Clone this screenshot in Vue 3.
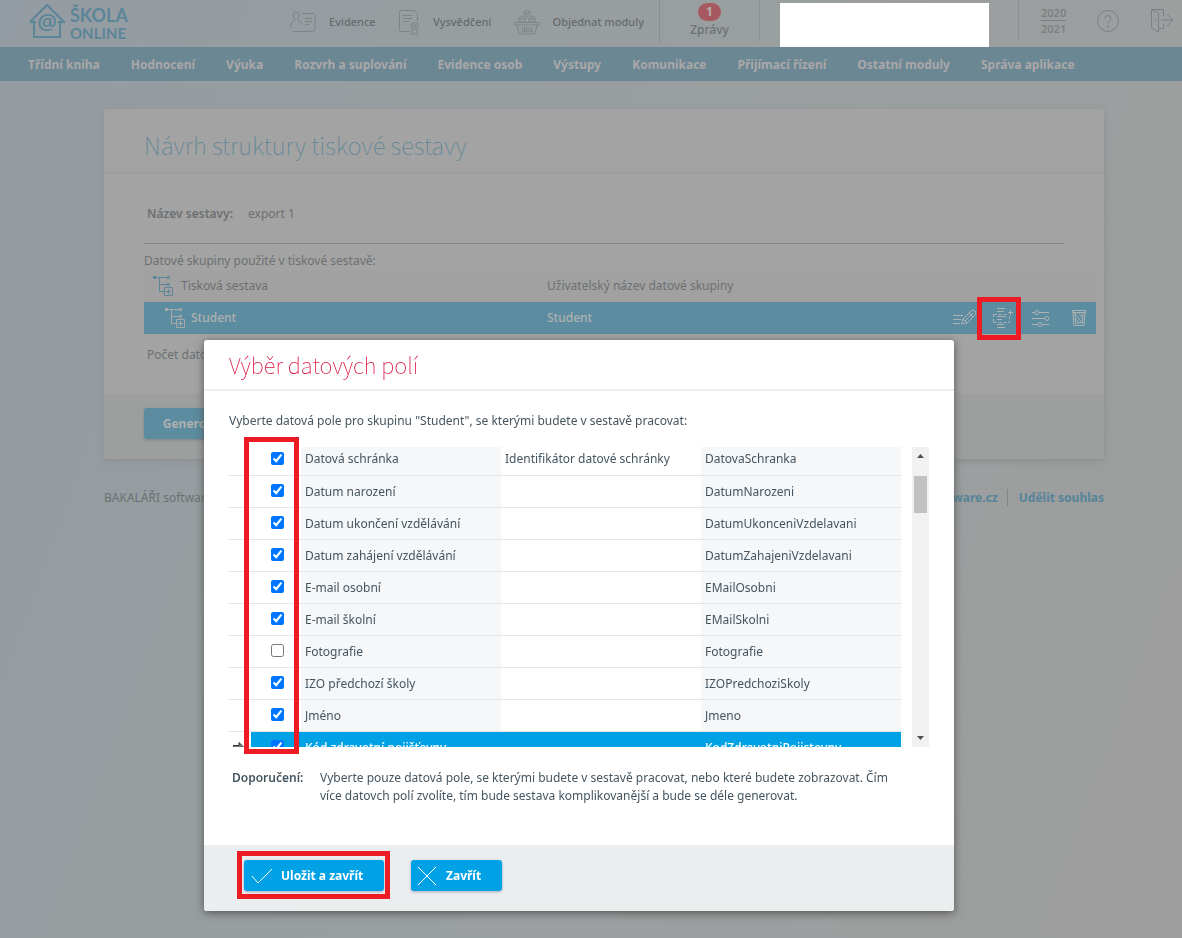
<template>
  <div class="page">
    <header class="topbar">
      <a href="#" class="logo" aria-label="Škola Online">
        <svg width="36" height="36" viewBox="0 0 36 36" fill="none" stroke="currentColor" stroke-width="2">
          <path d="M5 19V34H31V19" />
          <path d="M1 19L18 2L35 19H29M1 19H7" />
          <text x="18" y="27" text-anchor="middle" class="at">@</text>
        </svg>
        <span class="logoText"><b>ŠKOLA</b><b class="small">ONLINE</b></span>
      </a>
      <nav class="quick">
        <a href="#" class="quickLink">
          <svg width="26" height="22" viewBox="0 0 26 22" fill="none" stroke="currentColor">
            <path d="M12 2.500H23Q25 2.500 25 4.500V18Q25 20.500 23 20.500H3M1 17V13Q1 11 4 10Q6 9 4 7Q3 5 3.500 3Q4 1 6 1Q9 1 9 4Q9 6 8 7Q7 9 9 10Q12 11 12 13V14M15 7.500H22M15 10.500H22M15 13.500H19" />
          </svg>
          Evidence
        </a>
        <a href="#" class="quickLink">
          <svg width="22" height="28" viewBox="0 0 22 28" fill="none" stroke="currentColor">
            <path d="M12 23.500H3Q1.500 23.500 1.500 22V4Q1.500 2.500 3 2.500H16L19.500 6V13M5 7.500H14M5 10.500H14M5 13.500H11" />
            <circle cx="16.500" cy="18" r="3.500" /><circle cx="16.500" cy="18" r="1.500" />
            <path d="M14 21V27L16.500 25L19 27V21" />
          </svg>
          Vysvědčení
        </a>
        <a href="#" class="quickLink">
          <svg width="26" height="26" viewBox="0 0 26 26" fill="none" stroke="currentColor">
            <path d="M1 13.500H25V16H1ZM3 16L5 25H21L23 16M8 18L8.500 23H10.500V18M12 18V23H14V18M16 18V23H18L18.500 18M13 1L16 3V6L13 8L10 6V3ZM10 3L13 4.500L16 3M13 4.500V8M8 7L11 9V13H5V9ZM5 9L8 10.500L11 9M18 7L21 9V13H15V9ZM15 9L18 10.500L21 9" />
          </svg>
          Objednat moduly
        </a>
      </nav>
      <a href="#" class="messages"><span class="badge">1</span>Zprávy</a>
      <div class="user"></div>
      <div class="tools">
        <a href="#" class="year"><span>2020</span><span>2021</span></a>
        <a href="#" aria-label="Nápověda">
          <svg width="24" height="24" viewBox="0 0 24 24" fill="none" stroke="currentColor">
            <circle cx="12" cy="12" r="10.500" />
            <path d="M9 9Q9 6.500 12 6.500T15 9.500Q15 11 13.500 12T12 14.500M12 16.500V18.500M11 17.500H13" />
          </svg>
        </a>
        <a href="#" aria-label="Odhlásit">
          <svg width="24" height="25" viewBox="0 0 24 25" fill="none" stroke="currentColor">
            <path d="M1.500 1.500L8.500 5V24L1.500 20ZM1.500 1.500H13.500V8M13.500 16V20.500H8.500M11 12H23M17 6L23 12L17 18M5.500 11.500V13.500" />
          </svg>
        </a>
      </div>
    </header>

    <nav class="menu">
      <a v-for="item in menu" :key="item" href="#">{{ item }}</a>
    </nav>

    <main class="content">
      <section class="card">
        <h1>Návrh struktury tiskové sestavy</h1>
        <div class="cardBody">
          <p class="reportName"><b>Název sestavy:</b><span>export 1</span></p>
          <hr>
          <p>Datové skupiny použité v tiskové sestavě:</p>
          <div class="group">
            <svg class="tree" viewBox="0 0 20 20"><use href="#tree" /></svg>
            <span class="groupName">Tisková sestava</span>
            <span class="userName">Uživatelský název datové skupiny</span>
          </div>
          <div class="group selected">
            <svg class="tree" viewBox="0 0 20 20"><use href="#tree" /></svg>
            <span class="groupName">Student</span>
            <span class="userName">Student</span>
            <div class="actions">
              <button aria-label="Upravit">
                <svg width="24" height="18" viewBox="0 0 24 18" fill="none" stroke="currentColor">
                  <path d="M0 6.500H10M0 10.500H8M0 14.500H7M8.500 15L10 10L18 2Q20 0 22 2T22 6L14 14ZM10 10L14 14M16 4L20 8M12 12L20 4" />
                </svg>
              </button>
              <button class="marked" aria-label="Výběr datových polí">
                <svg width="20" height="20" viewBox="0 0 20 20" fill="none" stroke="currentColor">
                  <path d="M4 .5H12M4 3.500H11M4 8.500H13M4 11.500H9M4 16.500H11M4 19.500H12M17.500 2V7M15 4.500H20" />
                  <path d="M.5 6.500H14M.5 14.500H16.500M.5 6V15M16.500 8V15" stroke-dasharray="3 2" />
                </svg>
              </button>
              <button aria-label="Nastavení">
                <svg width="18" height="18" viewBox="0 0 18 18" fill="none" stroke="currentColor">
                  <path d="M0 3.500H3M7 3.500H17M0 9.500H13M0 15.500H6M10 15.500H17" />
                  <circle cx="5" cy="3.500" r="2" /><circle cx="15" cy="9.500" r="2" /><circle cx="8" cy="15.500" r="2" />
                </svg>
              </button>
              <button aria-label="Smazat">
                <svg width="16" height="16" viewBox="0 0 16 16" fill="none" stroke="currentColor">
                  <path d="M1.500 .5H14.500V2.500H1.500ZM2 3L3 15.500H13L14 3M4 3L4.500 13H11.500L12 3M4 3L11 13M8 3L12 9M4 8L8 13" />
                </svg>
              </button>
            </div>
          </div>
          <p class="count">Počet datových skupin: 1</p>
        </div>
        <div class="cardFooter"><button class="generate">Generovat</button></div>
      </section>
      <footer class="foot">
        <span>BAKALÁŘI software</span>
        <div><a href="#">www.bakalari-software.cz</a><a href="#" class="consent">Udělit souhlas</a></div>
      </footer>
    </main>

    <div class="overlay">
      <div class="modal" role="dialog" aria-labelledby="modalTitle">
        <h2 id="modalTitle">Výběr datových polí</h2>
        <div class="modalBody">
          <p>Vyberte datová pole pro skupinu "Student", se kterými budete v sestavě pracovat:</p>
          <div class="listWrap">
            <div class="list">
              <table>
                <tbody>
                  <tr v-for="field in fields" :key="field.code" :class="{ active: field.active }">
                    <td class="pointer">
                      <svg v-if="field.active" width="12" height="12" viewBox="0 0 12 12">
                        <path d="M.5 3.500H6V.5L11.500 6L6 11.500V8.500H.5Z" fill="#777" stroke="#333" />
                      </svg>
                    </td>
                    <td class="check"><input type="checkbox" v-model="field.checked" :aria-label="field.name"></td>
                    <td class="shade">{{ field.name }}</td>
                    <td>{{ field.note }}</td>
                    <td class="shade">{{ field.code }}</td>
                  </tr>
                </tbody>
              </table>
            </div>
            <div class="scrollbar">
              <svg width="7" height="4" viewBox="0 0 7 4"><path d="M0 4L3.500 0L7 4Z" /></svg>
              <div class="thumb"></div>
              <svg class="down" width="7" height="4" viewBox="0 0 7 4"><path d="M0 0L3.500 4L7 0Z" /></svg>
            </div>
            <div class="checksMark"></div>
          </div>
          <div class="hint">
            <b>Doporučení:</b>
            <p>Vyberte pouze datová pole, se kterými budete v sestavě pracovat, nebo které budete zobrazovat. Čím více datovch polí zvolíte, tím bude sestava komplikovanější a bude se déle generovat.</p>
          </div>
        </div>
        <div class="modalFooter">
          <button class="save marked">
            <svg width="22" height="16" viewBox="0 0 22 16" fill="none" stroke="currentColor"><path d="M1 8L7 15L21 1" /></svg>
            Uložit a zavřít
          </button>
          <button class="close">
            <svg width="18" height="18" viewBox="0 0 18 18" fill="none" stroke="currentColor"><path d="M0 0L18 18M18 0L0 18" /></svg>
            Zavřít
          </button>
        </div>
      </div>
    </div>

    <svg width="0" height="0" class="defs">
      <symbol id="tree" viewBox="0 0 20 20">
        <path d="M2 1.500H14M6.500 2V15.500H11M6.500 8.500H14M14.500 .5H16.500V2.500H14.500ZM14.500 7.500H16.500V9.500H14.500ZM11.500 11.500H19.500V19.500H11.500ZM13 15.500H18M15.500 13V18" fill="none" stroke="currentColor" />
        <path d="M0 0H3V3H0Z" fill="currentColor" />
      </symbol>
    </svg>
  </div>
</template>

<script setup>
  import { ref } from "vue"

  const menu = [
    "Třídní kniha", "Hodnocení", "Výuka", "Rozvrh a suplování", "Evidence osob",
    "Výstupy", "Komunikace", "Přijímací řízení", "Ostatní moduly", "Správa aplikace"
  ]

  const fields = ref([
    { name: "Datová schránka", note: "Identifikátor datové schránky", code: "DatovaSchranka", checked: true },
    { name: "Datum narození", code: "DatumNarozeni", checked: true },
    { name: "Datum ukončení vzdělávání", code: "DatumUkonceniVzdelavani", checked: true },
    { name: "Datum zahájení vzdělávání", code: "DatumZahajeniVzdelavani", checked: true },
    { name: "E-mail osobní", code: "EMailOsobni", checked: true },
    { name: "E-mail školní", code: "EMailSkolni", checked: true },
    { name: "Fotografie", code: "Fotografie", checked: false },
    { name: "IZO předchozí školy", code: "IZOPredchoziSkoly", checked: true },
    { name: "Jméno", code: "Jmeno", checked: true },
    { name: "Kód zdravotní pojišťovny", code: "KodZdravotniPojistovny", checked: true, active: true }
  ])
</script>

<style>
  body{
    margin: 0;
    background: #999fa1;
  }
</style>

<style scoped>
  *{
    box-sizing: border-box;
  }

  .page{
    min-height: 100vh;
    font-family: "Noto Sans", "Open Sans", sans-serif;
    font-size: 12px;
    line-height: 18px;
    color: #6c7072;
    background: linear-gradient(110deg, #949ca3, #979ea0 30%, #9b9fa0 60%, #9d9d9d);
  }

  a{
    color: inherit;
    text-decoration: none;
  }

  b{
    font-weight: 600;
  }

  h1, h2, p{
    margin: 0;
    font-weight: normal;
  }

  button{
    font: inherit;
    color: inherit;
    border: 0;
    padding: 0;
    background: none;
  }

  svg{
    display: block;
    flex: none;
  }

  .defs{
    position: absolute;
  }

  .topbar{
    display: flex;
    height: 47px;
    color: #7b8183;
    white-space: nowrap;
  }

  .logo{
    display: flex;
    flex: none;
    gap: 5px;
    padding: 3px 0 0 29px;
    width: 290px;
    color: #5c8598;
  }

  .at{
    font: 600 22px "Open Sans", sans-serif;
    fill: currentColor;
    stroke: none;
  }

  .logoText{
    display: flex;
    flex-direction: column;
    padding-top: 2px;
    font-family: Lato, sans-serif;
    font-size: 18px;
    line-height: 20px;
  }

  .logoText b{
    font-weight: bold;
  }

  .logoText .small{
    font-size: 15px;
    line-height: 16px;
  }

  .quick{
    display: flex;
    flex: none;
    justify-content: space-between;
    width: 370px;
    height: 43px;
    padding-right: 15px;
    border-right: 1px solid #8b8f91;
    font-size: 11px;
    font-weight: 500;
    color: #666b6d;
  }

  .quickLink{
    display: flex;
    align-items: center;
    gap: 13px;
  }

  .quickLink svg{
    color: #7e8486;
  }

  .messages{
    display: flex;
    flex: none;
    flex-direction: column;
    align-items: center;
    width: 100px;
    height: 41px;
    padding-top: 3px;
    border-right: 1px solid #8b8f91;
    font-weight: 500;
    color: #6c7173;
  }

  .badge{
    width: 23px;
    height: 18px;
    border-radius: 9px;
    background: #a65a60;
    color: #b5acac;
    font-weight: bold;
    text-align: center;
  }

  .user{
    flex: none;
    width: 209px;
    margin: 3px 29px 0 20px;
    background: #fff;
  }

  .tools{
    display: flex;
    align-items: center;
    gap: 30px;
    height: 41px;
    padding-left: 22px;
    border-left: 1px solid #8b8f91;
  }

  .year{
    display: flex;
    flex-direction: column;
    font-size: 11px;
    line-height: 15px;
    font-weight: 600;
  }

  .year span + span{
    border-top: 1px solid #7b8183;
  }

  .menu{
    display: flex;
    align-items: center;
    gap: 31px;
    height: 34px;
    padding: 1px 0 0 28px;
    background: #6b8793;
    color: #aaa8a8;
    font-weight: bold;
    white-space: nowrap;
  }

  .content{
    padding: 28px 78px 0 104px;
  }

  .card{
    border-radius: 3px;
    background: #a3a3a3;
    box-shadow: 0 2px 6px #8b8f90;
  }

  h1, h2{
    font-family: "Noto Sans CJK SC", "Noto Sans", sans-serif;
    font-weight: 100;
    line-height: 30px;
  }

  h1{
    height: 65px;
    padding: 21px 40px 0;
    border-bottom: 2px solid #9f9f9f;
    font-size: 24px;
    color: #5c8598;
  }

  .cardBody{
    height: 219px;
    padding: 31px 8px 0 40px;
  }

  .reportName{
    display: flex;
    gap: 15px;
    padding-left: 3px;
  }

  hr{
    height: 1px;
    margin: 20px 32px 8px 0;
    border: 0;
    background: #858585;
  }

  .group{
    display: flex;
    align-items: center;
    height: 32px;
    padding-left: 9px;
    background: #a1a1a1;
  }

  .tree{
    width: 20px;
    height: 20px;
    color: #5c8598;
  }

  .groupName{
    flex: none;
    width: 374px;
    padding-left: 8px;
  }

  .selected{
    padding-left: 21px;
    background: #5c8ca0;
    color: #b0b0b0;
    font-weight: 500;
  }

  .selected .tree{
    color: #aaa;
  }

  .selected .groupName{
    width: 362px;
    padding-left: 6px;
  }

  .selected .userName{
    flex: 1;
  }

  .actions{
    display: flex;
    gap: 3px;
    color: #aeb2b3;
  }

  .actions button{
    display: grid;
    place-items: center;
    width: 35px;
    height: 32px;
  }

  .marked{
    position: relative;
  }

  .marked::after{
    content: "";
    position: absolute;
    inset: -5px -1px -6px -8px;
    border: 5px solid #ed1c24;
  }

  .count{
    padding: 12px 3px 0;
  }

  .cardFooter{
    height: 66px;
    padding: 15px 40px;
    border-radius: 0 0 3px 3px;
    background: #9d9f9e;
  }

  .generate{
    width: 100px;
    height: 31px;
    border-radius: 3px;
    background: #5c8ca0;
    color: #b0b0b0;
    font-weight: bold;
    box-shadow: 0 1px 3px #808484;
  }

  .foot{
    display: flex;
    justify-content: space-between;
    padding-top: 30px;
  }

  .foot a{
    color: #56859a;
    font-weight: bold;
  }

  .foot .consent{
    margin-left: 9px;
    padding-left: 11px;
    border-left: 1px solid #858585;
  }

  .overlay{
    position: fixed;
    inset: 0;
    padding: 340px 228px 0 204px;
  }

  .modal{
    border-radius: 3px;
    background: #fff;
    color: #455560;
    box-shadow: 0 2px 8px #555;
  }

  h2{
    padding: 9px 25px 10px;
    border-bottom: 2px solid #e9eeef;
    font-size: 22px;
    color: #db0f3d;
  }

  .modalBody{
    height: 454px;
    padding: 21px 25px 0;
  }

  .listWrap{
    position: relative;
    display: flex;
    justify-content: space-between;
    height: 300px;
    margin: 17px 0 22px;
  }

  .list{
    flex: 1;
    overflow: hidden;
    margin-right: 11px;
  }

  table{
    width: 100%;
    margin-top: -4px;
    table-layout: fixed;
    border-collapse: collapse;
  }

  td{
    height: 32px;
    padding: 1px 4px 0;
    border-bottom: 1px solid #e3e6e8;
  }

  .pointer{
    width: 22px;
  }

  .check{
    width: 50px;
    padding: 0 4px 1px;
  }

  .check input{
    display: block;
    width: 13px;
    height: 13px;
    margin: 0 0 0 16px;
  }

  .shade{
    background: #f5f7f9;
  }

  .active td:not(.pointer){
    background: #00a2e5;
    color: #fff;
    font-weight: 500;
  }

  .scrollbar{
    display: flex;
    flex-direction: column;
    align-items: center;
    width: 17px;
    padding: 7px 0;
    background: #f1f1f1;
    fill: #505050;
  }

  .thumb{
    width: 13px;
    height: 37px;
    margin-top: 18px;
    background: #c1c1c1;
  }

  .down{
    margin-top: auto;
  }

  .checksMark{
    position: absolute;
    left: 15px;
    top: -10px;
    width: 55px;
    height: 317px;
    border: 5px solid #ed1c24;
  }

  .hint{
    display: flex;
    padding: 0 20px 0 3px;
  }

  .hint b{
    flex: none;
    width: 88px;
  }

  .modalFooter{
    display: flex;
    gap: 27px;
    height: 66px;
    padding: 15px 40px;
    border-radius: 0 0 3px 3px;
    background: #eaeeef;
  }

  .modalFooter button{
    display: flex;
    align-items: center;
    gap: 8px;
    height: 31px;
    padding-left: 7px;
    border-radius: 3px;
    background: #00a2e5;
    color: #fff;
    font-weight: bold;
    white-space: nowrap;
    box-shadow: 0 1px 3px #aab;
  }

  .modalFooter .save{
    width: 140px;
  }

  .modalFooter .close{
    width: 91px;
    gap: 10px;
  }

  .modalFooter .marked::after{
    inset: -9px -6px -8px -7px;
  }
</style>
